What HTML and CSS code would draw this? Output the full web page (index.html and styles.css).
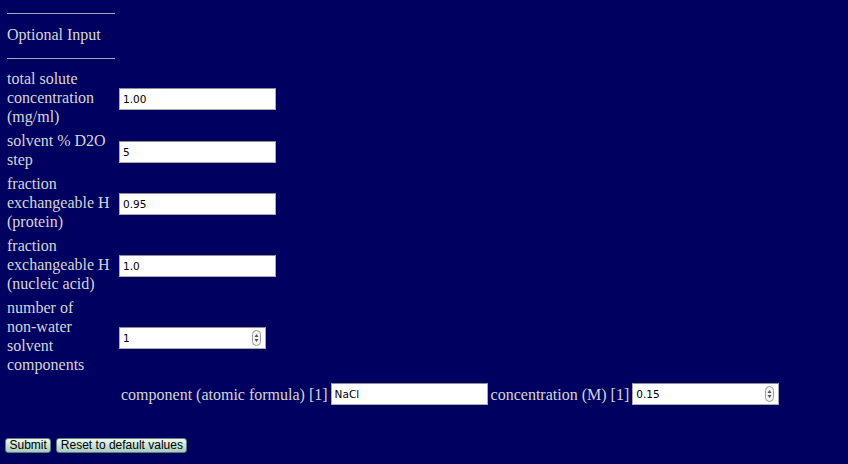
FILE: index.html
```html
<!DOCTYPE html>
<html lang="en">
<head>
  <meta charset="UTF-8">
  <title>Contrast Calculator - Optional Input</title>
  <link rel="stylesheet" href="styles.css">
</head>
<body>
  <form class="calc-form">
    <hr class="rule">
    <h3 class="section-title">Optional Input</h3>
    <hr class="rule">

    <div class="fields">
      <label class="field-label" for="solute">total solute concentration (mg/ml)</label>
      <input class="text-in" type="text" id="solute" name="solute" value="1.00">

      <label class="field-label" for="d2o_step">solvent % D2O step</label>
      <input class="text-in" type="text" id="d2o_step" name="d2o_step" value="5">

      <label class="field-label" for="fexchp">fraction exchangeable H (protein)</label>
      <input class="text-in" type="text" id="fexchp" name="fexchp" value="0.95">

      <label class="field-label" for="fexchn">fraction exchangeable H (nucleic acid)</label>
      <input class="text-in" type="text" id="fexchn" name="fexchn" value="1.0">

      <label class="field-label" for="nsolv">number of <span class="nobr">non-water</span> solvent components</label>
      <div class="spin spin-short">
        <input type="number" id="nsolv" name="nsolv" value="1" min="0">
        <svg class="spin-arrows" width="9" height="16" viewBox="0 0 9 16">
          <rect x="0.5" y="0.5" width="8" height="15" rx="4" fill="#f4f4f4" stroke="#9a9a9a"/>
          <path d="M4.5 4 L6.5 7 H2.5 Z" fill="#555"/>
          <path d="M4.5 12 L6.5 9 H2.5 Z" fill="#555"/>
        </svg>
      </div>

      <div class="component-row">
        <label for="solv_comp1">component (atomic formula) [1]</label>
        <input class="text-in" type="text" id="solv_comp1" name="solv_comp1" value="NaCl">
        <label for="solv_conc1">concentration (M) [1]</label>
        <div class="spin">
          <input type="number" id="solv_conc1" name="solv_conc1" value="0.15" step="0.01">
          <svg class="spin-arrows" width="9" height="16" viewBox="0 0 9 16">
            <rect x="0.5" y="0.5" width="8" height="15" rx="4" fill="#f4f4f4" stroke="#9a9a9a"/>
            <path d="M4.5 4 L6.5 7 H2.5 Z" fill="#555"/>
            <path d="M4.5 12 L6.5 9 H2.5 Z" fill="#555"/>
          </svg>
        </div>
      </div>
    </div>

    <div class="actions">
      <button type="submit">Submit</button>
      <button type="reset">Reset to default values</button>
    </div>
  </form>
</body>
</html>
```

FILE: styles.css
```css
body {
  margin: 0;
  background-color: #000060;
  color: #d6d6d6;
  font-family: "Liberation Serif", "Times New Roman", serif;
  font-size: 16px;
  line-height: 19px;
}
.calc-form {
  padding: 13px 0 0 5px;
}
.rule {
  width: 108px;
  margin: 0 0 0 2px;
  border: 0;
  border-top: 1px solid #a8a8b4;
  height: 0;
}
.section-title {
  margin: 11px 0 14px 2px;
  font-size: 16px;
  font-weight: normal;
}
.fields {
  display: grid;
  grid-template-columns: 108px auto;
  column-gap: 4px;
  row-gap: 5px;
  align-items: center;
  justify-items: start;
  margin: 10px 0 0 2px;
}
.nobr {
  white-space: nowrap;
}
.text-in, .spin {
  box-sizing: border-box;
  width: 157px;
  height: 22px;
  border: 1px solid #aaa;
  border-top-color: #8c8c8c;
  background: #fff;
  margin-top: 3px;
}
.text-in, .spin input {
  padding: 0 3px;
  font-family: "DejaVu Sans", Verdana, sans-serif;
  font-size: 10.5px;
  color: #000;
}
.spin {
  display: flex;
  align-items: center;
  width: 147px;
  padding-right: 4px;
}
.spin input {
  flex: 1;
  min-width: 0;
  height: 100%;
  border: 0;
  outline: none;
  background: transparent;
  -moz-appearance: textfield;
}
.spin input::-webkit-inner-spin-button,
.spin input::-webkit-outer-spin-button {
  -webkit-appearance: none;
  margin: 0;
}
.spin-arrows {
  flex: none;
}
.component-row {
  grid-column: 2;
  display: flex;
  align-items: center;
  gap: 3px;
  padding-left: 2px;
  margin-top: 4px;
}
.component-row .text-in, .component-row .spin {
  margin-top: 0;
}
.actions {
  display: flex;
  gap: 5px;
  margin-top: 33px;
}
.actions button {
  height: 15px;
  padding: 0 3.5px;
  border: 1px solid #5f7d72;
  border-radius: 3px;
  background: linear-gradient(#eef8f4, #c8e2d8 50%, #a9ccbf);
  font-family: "Liberation Sans", Arial, sans-serif;
  font-size: 12px;
  line-height: 13px;
  color: #000;
  cursor: pointer;
}
```
